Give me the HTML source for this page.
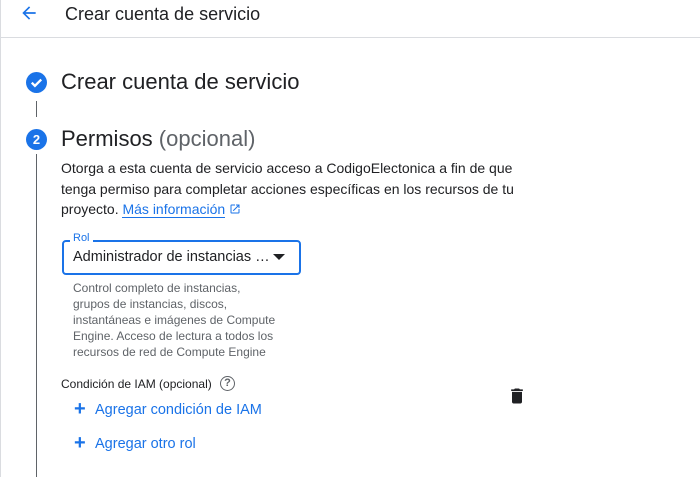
<!DOCTYPE html>
<html><head><style>
body{margin:0;width:700px;height:477px;background:#fff;font-family:"Liberation Sans",sans-serif;color:#202124;position:relative;overflow:hidden}
.a{position:absolute;white-space:nowrap}
</style></head><body>
<div class="a" style="left:0;top:0;width:1px;height:477px;background:#dadce0"></div>
<svg class="a" style="left:17px;top:3px" width="24" height="20" viewBox="0 0 24 24"><path d="M20 11H7.83l5.59-5.59L12 4l-8 8 8 8 1.41-1.41L7.83 13H20v-2z" fill="#1a73e8"/></svg>
<div class="a" style="left:65px;top:4px;font-size:18px">Crear cuenta de servicio</div>
<div class="a" style="left:0;top:37px;width:700px;height:1px;background:#dadce0"></div>

<svg class="a" style="left:26px;top:72px" width="21" height="21" viewBox="0 0 20 20"><circle cx="10" cy="10" r="10" fill="#1a73e8"/><path d="M5.5 10.2l3 3 6-6" stroke="#fff" stroke-width="2.2" fill="none"/></svg>
<div class="a" style="left:61px;top:69px;font-size:22px">Crear cuenta de servicio</div>
<div class="a" style="left:36px;top:101px;width:1px;height:16px;background:#5f6368"></div>

<div class="a" style="left:26px;top:129px;width:21px;height:21px;border-radius:50%;background:#1a73e8;color:#fff;font-size:13px;font-weight:bold;text-align:center;line-height:21px">2</div>
<div class="a" style="left:61px;top:126px;font-size:22px">Permisos <span style="color:#5f6368">(opcional)</span></div>
<div class="a" style="left:36px;top:154px;width:1px;height:323px;background:#5f6368"></div>

<div class="a" style="left:61px;top:158px;font-size:14px;line-height:20.5px">Otorga a esta cuenta de servicio acceso a CodigoElectonica a fin de que<br>tenga permiso para completar acciones específicas en los recursos de tu<br>proyecto. <span style="color:#1a73e8;border-bottom:1px solid #1a73e8">Más información</span> <svg width="12" height="12" viewBox="0 0 24 24" style="vertical-align:-1px"><path d="M19 19H5V5h7V3H5a2 2 0 00-2 2v14a2 2 0 002 2h14c1.1 0 2-.9 2-2v-7h-2v7zM14 3v2h3.59l-9.83 9.83 1.41 1.41L19 6.41V10h2V3h-7z" fill="#1a73e8"/></svg></div>

<div class="a" style="left:62px;top:240px;width:235px;height:31px;border:2px solid #1a73e8;border-radius:4px"></div>
<div class="a" style="left:70px;top:232px;background:#fff;padding:0 3px;font-size:11px;color:#1a73e8">Rol</div>
<div class="a" style="left:73px;top:249px;font-size:14.5px">Administrador de instancias …</div>
<div class="a" style="left:273px;top:254px;width:0;height:0;border-left:6px solid transparent;border-right:6px solid transparent;border-top:6px solid #202124"></div>

<div class="a" style="left:73px;top:280px;font-size:12px;line-height:16px;color:#5f6368">Control completo de instancias,<br>grupos de instancias, discos,<br>instantáneas e imágenes de Compute<br>Engine. Acceso de lectura a todos los<br>recursos de red de Compute Engine</div>

<div class="a" style="left:61px;top:377px;font-size:12px">Condición de IAM (opcional)</div>
<div class="a" style="left:220px;top:376px;width:13px;height:13px;border:1.5px solid #5f6368;border-radius:50%;font-size:11px;color:#5f6368;text-align:center;line-height:13px;font-weight:bold">?</div>

<div class="a" style="left:74px;top:399px;font-size:20px;color:#1a73e8;line-height:20px;font-weight:bold">+</div>
<div class="a" style="left:95px;top:402px;font-size:14.5px;color:#1a73e8">Agregar condición de IAM</div>
<div class="a" style="left:74px;top:433px;font-size:20px;color:#1a73e8;line-height:20px;font-weight:bold">+</div>
<div class="a" style="left:95px;top:436px;font-size:14.5px;color:#1a73e8">Agregar otro rol</div>

<svg class="a" style="left:507px;top:386px" width="20" height="20" viewBox="0 0 24 24"><path d="M6 19c0 1.1.9 2 2 2h8c1.1 0 2-.9 2-2V7H6v12zM19 4h-3.5l-1-1h-5l-1 1H5v2h14V4z" fill="#202124"/></svg>
</body></html>
